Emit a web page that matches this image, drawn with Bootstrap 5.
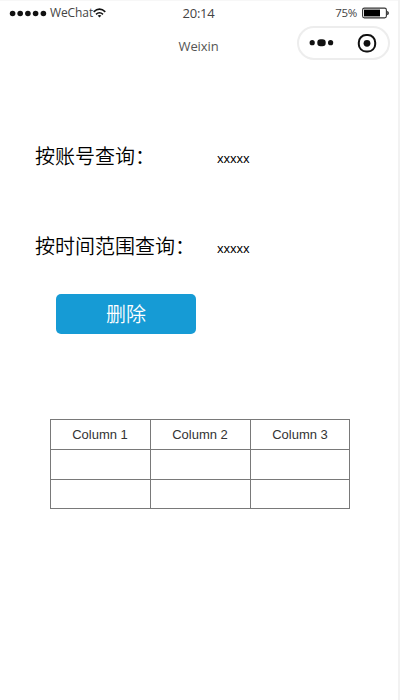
<!DOCTYPE html>
<html lang="zh-CN">
<head>
<meta charset="utf-8">
<meta name="viewport" content="width=device-width, initial-scale=1">
<title>Weixin</title>
<link href="https://cdn.jsdelivr.net/npm/bootstrap@5.3.0/dist/css/bootstrap.min.css" rel="stylesheet">
<style>
body { background: #f2f2f2; font-family: "Liberation Sans", "Noto Sans CJK SC", sans-serif; color: #000; }
.phone { width: 398px; height: 700px; background: #fff; border-top: 1px solid #f7f7f7; overflow: hidden; }
.status { height: 24px; padding: 0 8px 0 9px; font: 12px/24px "Open Sans", sans-serif; color: #444; }
.status .side { flex: 1 1 0; }
.carrier { letter-spacing: -.1px; margin-left: 3px; }
.clock { font-size: 13px; letter-spacing: -.2px; margin-right: 2px; }
.percent { font-size: 11.5px; letter-spacing: -.3px; margin-right: 5px; }
.titlebar { height: 36px; padding: 1px 8px 0 7px; }
.titlebar .side { flex: 1 1 0; }
.title { font: 13px/41px "Open Sans", sans-serif; letter-spacing: -.1px; color: #555; }
.capsule { width: 93px; height: 34px; border: 2px solid #ededed; border-radius: 17px; }
.content { padding: 80px 0 0 35px; }
.query { height: 30px; margin-bottom: 60px; }
.query-label { width: 182px; font: 20px/30px "Noto Sans CJK SC", sans-serif; font-weight: 350; }
.query-value { font: 12.5px/36px "Noto Sans", sans-serif; letter-spacing: -.1px; }
.btn-delete { width: 140px; height: 40px; margin: -27px 0 0 21px; background: #169bd5; border-radius: 5px; color: #fff; font: 350 20px/38px "Noto Sans CJK SC", sans-serif; }
.btn-delete:hover { background: #1289bd; color: #fff; }
.grid-table { width: 300px; height: 90px; margin: 85px 0 0 15px; table-layout: fixed; border-collapse: separate; border-spacing: 0; border: solid #797979; border-width: 1px 0 0 1px; font-size: 13px; color: #333; }
.grid-table th, .grid-table td { height: 30px; padding: 0; border: solid #797979; border-width: 0 1px 1px 0; font-weight: 400; text-align: center; vertical-align: middle; line-height: 15px; }
.grid-table th:not(:last-child) { padding-right: 1px; }
.grid-table tr:last-child td { height: 29px; }
.grid-table col { width: 100px; }
.grid-table col:last-child { width: 99px; }
</style>
</head>
<body>
<main class="phone">
  <header>
    <div class="status d-flex">
      <div class="side d-flex align-items-center">
        <svg width="38" height="8" viewBox="0 0 38 8"><g fill="#111"><circle cx="3.6" cy="4.5" r="2.8"/><circle cx="11.2" cy="4.5" r="2.8"/><circle cx="18.9" cy="4.5" r="2.8"/><circle cx="26.6" cy="4.5" r="2.8"/><circle cx="34.4" cy="4.5" r="2.8"/></g></svg>
        <span class="carrier">WeChat</span>
        <svg width="13" height="10" viewBox="0 0 13 10" fill="none" stroke="#111" stroke-width="1.6"><path d="M.7 3.8Q6.5-1.4 12.3 3.8M3 6.3Q6.5 3.2 10 6.3"/><path d="M4.6 7.6Q6.5 6.4 8.4 7.6L6.5 9.5Z" fill="#111" stroke="none"/></svg>
      </div>
      <div class="clock">20:14</div>
      <div class="side d-flex align-items-center justify-content-end">
        <span class="percent">75%</span>
        <svg width="28" height="12" viewBox="0 0 28 12"><rect x=".6" y="1.1" width="23.8" height="9.8" rx="1.8" fill="#fff" stroke="#333" stroke-width="1.1"/><rect x="2" y="2.6" width="16" height="6.8" fill="#000"/><path d="M25.6 4.2Q27.6 6 25.6 8Z" fill="#222" stroke="#222" stroke-width=".6"/></svg>
      </div>
    </div>
    <div class="titlebar d-flex">
      <div class="side"></div>
      <div class="title">Weixin</div>
      <div class="side d-flex justify-content-end">
        <div class="capsule">
          <svg class="d-block" width="89" height="30" viewBox="0 0 89 30"><g fill="#111"><circle cx="13.2" cy="14.7" r="2.6"/><rect x="18.3" y="11.2" width="8.4" height="7" rx="3.3"/><circle cx="31.6" cy="14.7" r="2.6"/><circle cx="68" cy="15.3" r="3.4"/></g><rect x="59.8" y="7.1" width="16.4" height="16.4" rx="7.3" fill="none" stroke="#111" stroke-width="2"/></svg>
        </div>
      </div>
    </div>
  </header>
  <section class="content">
    <div class="query d-flex"><div class="query-label">按账号查询：</div><div class="query-value">xxxxx</div></div>
    <div class="query d-flex"><div class="query-label">按时间范围查询：</div><div class="query-value">xxxxx</div></div>
    <button type="button" class="btn btn-delete d-block border-0 p-0">删除</button>
    <table class="grid-table">
      <colgroup><col><col><col></colgroup>
      <thead><tr><th>Column 1</th><th>Column 2</th><th>Column 3</th></tr></thead>
      <tbody><tr><td></td><td></td><td></td></tr><tr><td></td><td></td><td></td></tr></tbody>
    </table>
  </section>
</main>
<script src="https://cdn.jsdelivr.net/npm/bootstrap@5.3.0/dist/js/bootstrap.bundle.min.js"></script>
</body>
</html>
